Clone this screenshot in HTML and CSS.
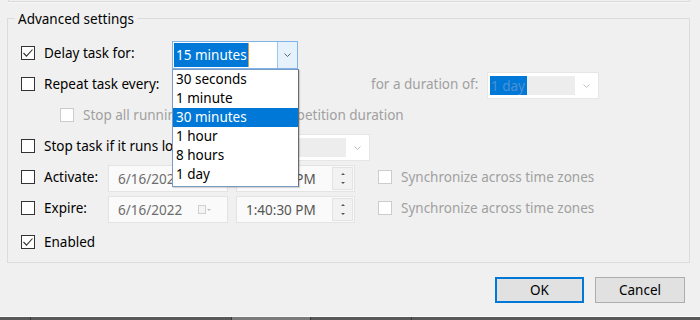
FILE: index.html
```html
<!DOCTYPE html>
<html>
<head>
<meta charset="utf-8">
<link rel="stylesheet" href="styles.css">
</head>
<body>
<div class="prev"></div>
<div class="group">
  <div class="legend">Advanced settings</div>
  <div class="rows">
    <div class="row">
      <span class="cb"><svg class="check" viewBox="0 0 12 12"><polyline points="1.5,6 4.5,9.2 10.5,2.5"/></svg></span>
      <span class="lbl w-first">Delay task for:</span>
      <div class="combo active ctrl">
        <div class="combo-text"><span class="sel">15 minutes</span><span class="caret"></span></div>
        <div class="combo-btn"><svg class="chev" viewBox="0 0 7 4"><polyline points="0.5,0.5 3.5,3.5 6.5,0.5"/></svg></div>
      </div>
    </div>
    <div class="row">
      <span class="cb"></span>
      <span class="lbl w-first">Repeat task every:</span>
      <div class="combo-hidden ctrl"></div>
      <span class="lbl dis w-dur">for a duration of:</span>
      <div class="combo disabled ctrl dur-combo">
        <div class="combo-inner"><span class="sel-dis">1 day</span></div>
        <div class="combo-btn-dis"><svg class="chev" viewBox="0 0 7 4"><polyline points="0.5,0.5 3.5,3.5 6.5,0.5"/></svg></div>
      </div>
    </div>
    <div class="row indent">
      <span class="cb dis"></span>
      <span class="lbl dis">Stop all running tasks at end of repetition duration</span>
    </div>
    <div class="row">
      <span class="cb"></span>
      <span class="lbl w-stop">Stop task if it runs longer than:</span>
      <div class="combo disabled ctrl stop-combo">
        <div class="combo-inner"></div>
        <div class="combo-btn-dis"><svg class="chev" viewBox="0 0 7 4"><polyline points="0.5,0.5 3.5,3.5 6.5,0.5"/></svg></div>
      </div>
    </div>
    <div class="row">
      <span class="cb"></span>
      <span class="lbl w-act">Activate:</span>
      <div class="field date ctrl"><span class="ftext">6/16/2022</span><span class="cal"><span class="cal-box"></span><span class="cal-arr"></span></span></div>
      <div class="field time ctrl"><span class="ftext">1:40:30 PM</span><span class="spin"><span class="up"></span><span class="down"></span></span></div>
      <span class="cb dis sync"></span>
      <span class="lbl dis">Synchronize across time zones</span>
    </div>
    <div class="row">
      <span class="cb"></span>
      <span class="lbl w-act">Expire:</span>
      <div class="field date ctrl"><span class="ftext">6/16/2022</span><span class="cal"><span class="cal-box"></span><span class="cal-arr"></span></span></div>
      <div class="field time ctrl"><span class="ftext">1:40:30 PM</span><span class="spin"><span class="up"></span><span class="down"></span></span></div>
      <span class="cb dis sync"></span>
      <span class="lbl dis">Synchronize across time zones</span>
    </div>
    <div class="row last">
      <span class="cb"><svg class="check" viewBox="0 0 12 12"><polyline points="1.5,6 4.5,9.2 10.5,2.5"/></svg></span>
      <span class="lbl">Enabled</span>
    </div>
  </div>
</div>
<div class="buttons">
  <button class="btn ok">OK</button>
  <button class="btn cancel">Cancel</button>
</div>
<div class="taskbar">
  <span class="tb-seg s1"></span>
  <span class="tb-seg s2"></span>
  <span class="tb-seg s3"></span>
  <span class="tb-seg s4"></span>
</div>
<div class="dropdown">
  <div class="item">30 seconds</div>
  <div class="item">1 minute</div>
  <div class="item hl">30 minutes</div>
  <div class="item">1 hour</div>
  <div class="item">8 hours</div>
  <div class="item">1 day</div>
</div>
</body>
</html>
```
FILE: styles.css
```css
html, body {
  margin: 0;
  padding: 0;
}
body {
  width: 700px;
  height: 320px;
  overflow: hidden;
  position: relative;
  background: #f0f0f0;
  font-family: "Noto Sans", "Open Sans", sans-serif;
  font-size: 13.5px;
  color: #000;
}
.prev {
  height: 1px;
  margin: 0 10px 0 8px;
  border: 1px solid #dadada;
  border-top: 0;
  box-shadow: 0 1px 0 #f7f7f7;
}
.group {
  box-sizing: border-box;
  width: 683px;
  height: 245px;
  margin: 16px 0 0 7px;
  border: 1px solid #dcdcdc;
  padding: 0 0 0 13px;
}
.legend {
  width: fit-content;
  margin: -8px 0 0 -6px;
  padding: 0 3px;
  line-height: 16px;
  background: #f0f0f0;
}
.rows {
  display: flex;
  flex-direction: column;
  gap: 3px;
  margin-top: 12px;
}
.row {
  display: flex;
  align-items: center;
  height: 28px;
}
.row.indent {
  padding-left: 39px;
}
.row.last {
  margin-top: 3px;
}
.ctrl {
  margin-top: 3px;
}
.cb {
  box-sizing: border-box;
  width: 14px;
  height: 14px;
  border: 1px solid #333;
  background: #fff;
  margin-right: 9px;
  flex: none;
  display: flex;
  align-items: center;
  justify-content: center;
}
.cb.dis {
  border-color: #cccccc;
}
.cb.sync {
  margin-left: 23px;
}
.check {
  width: 12px;
  height: 12px;
}
.check polyline {
  fill: none;
  stroke: #333;
  stroke-width: 1.1;
}
.lbl {
  white-space: nowrap;
  flex: none;
}
.lbl.dis {
  color: #a0a0a0;
}
.w-first {
  width: 128px;
}
.w-dur {
  width: 116px;
  margin-left: 73px;
  color: #8f8f8f;
}
.w-stop {
  width: 192px;
}
.w-act {
  width: 64px;
}
.combo {
  box-sizing: border-box;
  display: flex;
  flex: none;
  background: #fff;
}
.combo.active {
  width: 126px;
  height: 28px;
  border: 1px solid #7eb4ea;
}
.combo-text {
  flex: 1;
  display: flex;
  padding: 1px 2px 1px 1px;
}
.sel {
  display: flex;
  align-items: center;
  background: #0078d7;
  color: #fff;
  padding: 0 1px 0 2px;
}
.caret {
  width: 1px;
  background: #e59a4a;
}
.combo-btn {
  width: 19px;
  background: #e5f1fb;
  border-left: 1px solid #9cc4ee;
  display: flex;
  align-items: center;
  justify-content: center;
}
.chev {
  width: 7px;
  height: 4px;
}
.chev polyline {
  fill: none;
  stroke: #606060;
  stroke-width: 1;
}
.combo.disabled .chev polyline {
  stroke: #c2c2c2;
}
.combo-hidden {
  width: 126px;
  height: 27px;
  flex: none;
}
.combo.disabled {
  height: 27px;
  border: 1px solid #e6e6e6;
  padding: 3px 0 3px 2px;
}
.dur-combo {
  width: 112px;
}
.stop-combo {
  width: 134px;
}
.combo-inner {
  flex: 1;
  background: #ededed;
  display: flex;
}
.sel-dis {
  display: flex;
  align-items: center;
  background: #0078d7;
  color: #4f90d4;
  padding: 0 2px 0 1px;
}
.combo-btn-dis {
  width: 23px;
  display: flex;
  align-items: center;
  justify-content: center;
}
.field {
  box-sizing: border-box;
  height: 27px;
  flex: none;
  display: flex;
  align-items: center;
  background: #fafafa;
  border: 1px solid #e3e3e3;
  padding-left: 9px;
}
.ftext {
  flex: 1;
}
.field.date {
  width: 120px;
  margin-left: 0;
  color: #6d6d6d;
}
.field.time {
  width: 119px;
  margin-left: 8px;
  color: #555;
  padding-right: 1px;
}
.cal {
  display: flex;
  align-items: center;
  gap: 1px;
  margin-right: 16px;
}
.cal-box {
  width: 6px;
  height: 7px;
  border: 1px solid #d0d0d0;
  background: #f4f4f4;
}
.cal-arr {
  width: 0;
  height: 0;
  border-left: 2px solid transparent;
  border-right: 2px solid transparent;
  border-top: 2px solid #bdbdbd;
}
.spin {
  box-sizing: border-box;
  width: 21px;
  height: 23px;
  border: 1px solid #e3e3e3;
  background: #f2f2f2;
  display: flex;
  flex-direction: column;
  align-items: center;
  justify-content: space-between;
  padding: 5px 0 5px;
}
.up {
  width: 0;
  height: 0;
  border-left: 2px solid transparent;
  border-right: 2px solid transparent;
  border-bottom: 2px solid #555;
}
.down {
  width: 0;
  height: 0;
  border-left: 2px solid transparent;
  border-right: 2px solid transparent;
  border-top: 2px solid #555;
}
.buttons {
  display: flex;
  justify-content: flex-end;
  gap: 11px;
  margin-top: 14px;
  padding-right: 15px;
}
.btn {
  box-sizing: border-box;
  height: 26px;
  background: #e1e1e1;
  border: 1px solid #adadad;
  font-family: inherit;
  font-size: 13.5px;
  color: #000;
  padding: 0;
  margin: 0;
}
.btn.ok {
  width: 89px;
  border: 2px solid #0078d7;
}
.btn.cancel {
  width: 90px;
}
.taskbar {
  display: flex;
  margin-top: 13px;
  height: 3px;
  border-top: 1px solid #fafafa;
  background: #595959;
}
.tb-seg {
  height: 3px;
  border-right: 1px solid #3a3a3a;
}
.s1 { width: 30px; }
.s2 { width: 200px; }
.s3 { width: 78px; background: #7a7a7a; }
.s4 { width: 100px; }
.dropdown {
  position: absolute;
  left: 172px;
  top: 69px;
  box-sizing: border-box;
  width: 127px;
  height: 118px;
  background: #fff;
  border: 1px solid #7a9cc4;
  border-right-color: #6b6b6b;
  box-shadow: 1px 1px 1px rgba(0,0,0,0.15);
}
.item {
  height: 19px;
  line-height: 19px;
  padding-left: 3px;
  white-space: nowrap;
}
.item.hl {
  background: #0078d7;
  color: #fff;
}
```
